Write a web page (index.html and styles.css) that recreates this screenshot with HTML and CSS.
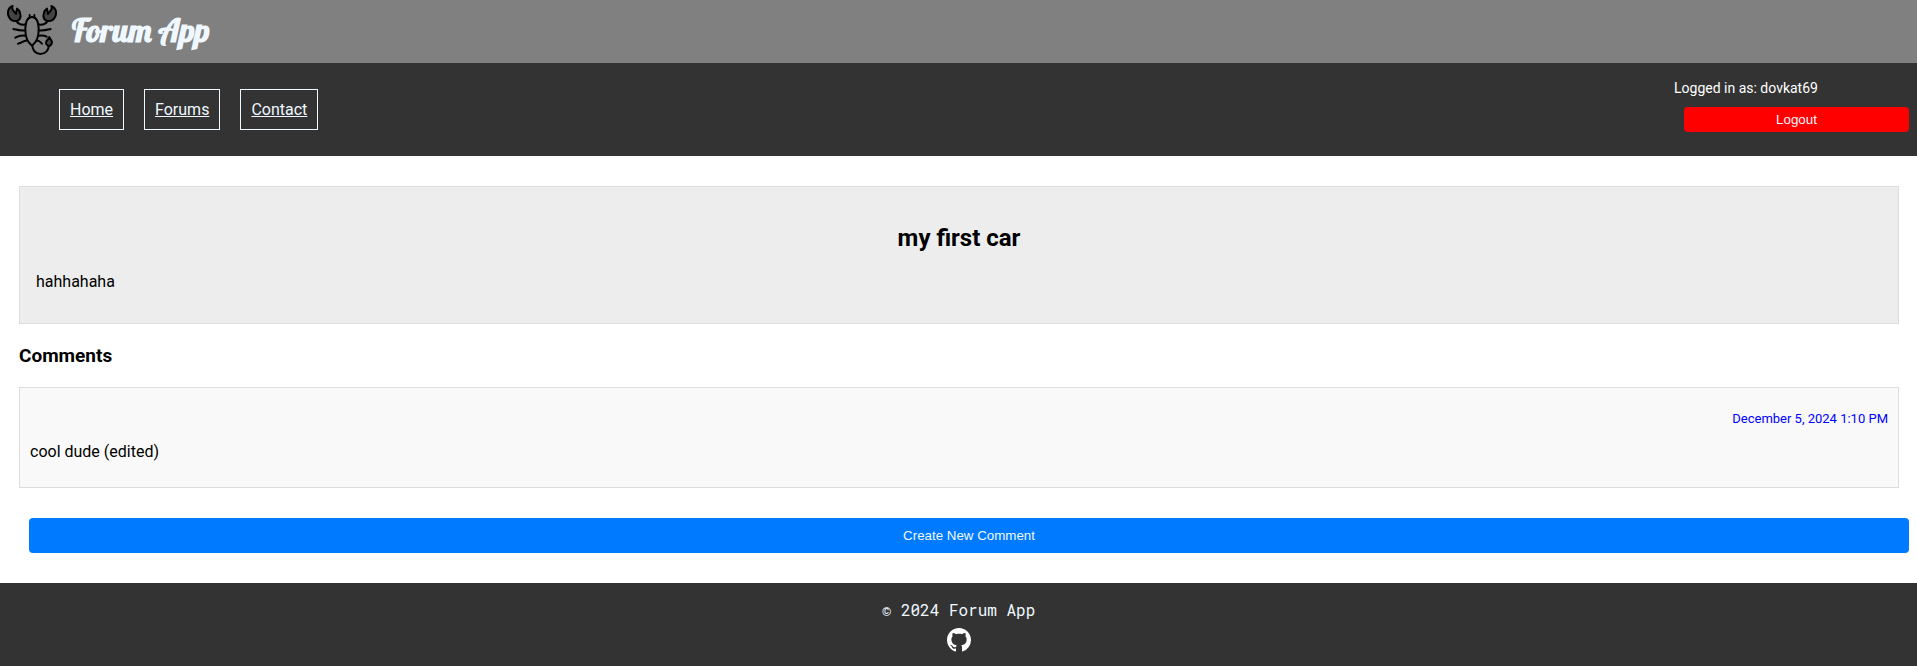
FILE: index.html
```html
<!DOCTYPE html>
<html lang="en">
<head>
<meta charset="utf-8">
<title>Forum App</title>
<link rel="stylesheet" href="styles.css">
</head>
<body>
<header class="brand">
  <svg class="brand-logo" viewBox="0 0 150 150" aria-hidden="true">
    <g fill="none" stroke="#000" stroke-width="6" stroke-linecap="round" stroke-linejoin="round">
      <path fill="#444" d="M17 3C4 7 0 22 5 34c4 10 13 15 23 14 10-2 14-10 12-20-1-8-5-14-10-17l-3 16-8-10c-4-5-5-9-2-14z"/>
      <path fill="#444" d="M133 3c13 4 17 19 12 31-4 10-13 15-23 14-10-2-14-10-12-20 1-8 5-14 10-17l3 16 8-10c4-5 5-9 2-14z"/>
      <path d="M29 49c6 9 14 12 28 9M121 49c-6 9-14 12-28 9"/>
      <path d="M75 36c-14 0-20 18-20 39 0 22 8 38 20 47 12-9 20-25 20-47 0-21-6-39-20-39z"/>
      <path d="M68 38v-8M82 38v-8"/>
      <path d="M55 76c-15 2-24-1-36-4M55 92c-13-1-20 0-30 6M58 107c-9-1-13 8-25 9"/>
      <path d="M95 76c15 2 24-1 36-4M95 92c13-1 19 0 24 3M92 107c6 0 8 5 13 9"/>
      <path d="M76 121c0 15 10 26 24 26 16 0 26-12 25-26"/>
    </g>
    <path fill="#444" stroke="#000" stroke-width="6" stroke-linejoin="round" d="M127 96c-2 7-12 11-10 19 1 5 6 6 9 9 4-3 9-5 9-12 0-6-6-9-8-16z"/>
  </svg>
  <h1 class="brand-name">Forum App</h1>
</header>
<nav class="navbar">
  <ul class="menu">
    <li><a class="menu-link" href="#">Home</a></li>
    <li><a class="menu-link" href="#">Forums</a></li>
    <li><a class="menu-link" href="#">Contact</a></li>
  </ul>
  <div class="account">
    <span class="account-name">Logged in as: dovkat69</span>
    <button class="logout" type="button">Logout</button>
  </div>
</nav>
<main class="content">
  <article class="post">
    <h2 class="post-title">my first car</h2>
    <p class="post-body">hahhahaha</p>
  </article>
  <h3 class="comments-title">Comments</h3>
  <div class="comment">
    <time class="comment-date" datetime="2024-12-05T13:10">December 5, 2024 1:10 PM</time>
    <p class="comment-body">cool dude (edited)</p>
  </div>
  <button class="create" type="button">Create New Comment</button>
</main>
<footer class="footer">
  <p class="copyright">© 2024 Forum App</p>
  <a class="github" href="#" aria-label="GitHub">
    <svg class="github-icon" viewBox="0 0 16 16" fill="currentColor" aria-hidden="true"><path d="M8 0C3.58 0 0 3.58 0 8c0 3.54 2.29 6.53 5.47 7.59.4.07.55-.17.55-.38 0-.19-.01-.82-.01-1.49-2.01.37-2.53-.49-2.69-.94-.09-.23-.48-.94-.82-1.13-.28-.15-.68-.52-.01-.53.63-.01 1.08.58 1.23.82.72 1.21 1.87.87 2.33.66.07-.52.28-.87.51-1.07-1.78-.2-3.64-.89-3.64-3.95 0-.87.31-1.59.82-2.15-.08-.2-.36-1.02.08-2.12 0 0 .67-.21 2.2.82.64-.18 1.32-.27 2-.27s1.36.09 2 .27c1.53-1.04 2.2-.82 2.2-.82.44 1.1.16 1.92.08 2.12.51.56.82 1.27.82 2.15 0 3.07-1.87 3.75-3.65 3.95.29.25.54.73.54 1.48 0 1.07-.01 1.93-.01 2.2 0 .21.15.46.55.38A8.01 8.01 0 0 0 16 8c0-4.42-3.58-8-8-8z"/></svg>
  </a>
</footer>
</body>
</html>
```
FILE: styles.css
```css
* {
  box-sizing: border-box;
}

body {
  margin: 0;
  background: #fff;
  color: #000;
  font-family: Roboto, "Liberation Sans", sans-serif;
  font-size: 16px;
  line-height: 19px;
}

h1, h2, h3, p, ul {
  margin: 0;
}

.brand {
  display: flex;
  align-items: center;
  gap: 15px;
  padding: 5px 7px 8px;
  background: #808080;
}

.brand-logo {
  width: 50px;
  height: 50px;
}

.brand-name {
  color: #f0f8ff;
  font-family: Lobster, "Liberation Serif", serif;
  font-size: 32px;
  line-height: 40px;
}

.navbar {
  display: flex;
  justify-content: space-between;
  align-items: flex-start;
  padding: 16px 8px 24px 59px;
  background: #333;
}

.menu {
  display: flex;
  gap: 20px;
  padding: 10px 0 0;
  list-style: none;
}

.menu-link {
  display: block;
  padding: 10px;
  border: 1px solid #f0f8ff;
  color: #f0f8ff;
}

.account {
  display: flex;
  flex-direction: column;
  gap: 10px;
  width: 235px;
}

.account-name {
  color: #fff;
  font-size: 14px;
  line-height: 18px;
}

.logout {
  margin-left: 10px;
  padding: 5px;
  border: 0;
  border-radius: 4px;
  background: #f00;
  color: #f0f8ff;
  font-family: "Liberation Sans", sans-serif;
  line-height: 15px;
}

.content {
  display: flex;
  flex-direction: column;
  padding: 30px 18px 30px 19px;
}

.post {
  padding: 36px 16px 32px;
  border: 1px solid #ddd;
  background: #ededed;
}

.post-title {
  margin-bottom: 19px;
  font-size: 24px;
  line-height: 30px;
  text-align: center;
}

.comments-title {
  margin: 20px 0;
  font-size: 19px;
  line-height: 23px;
}

.comment {
  display: flex;
  flex-direction: column;
  gap: 14px;
  padding: 22px 10px 26px;
  border: 1px solid #ddd;
  background: #f9f9f9;
}

.comment-date {
  color: #00f;
  font-size: 13px;
  line-height: 18px;
  text-align: right;
}

.create {
  margin: 30px -10px 0 10px;
  padding: 10px;
  border: 0;
  border-radius: 4px;
  background: #007bff;
  color: #f0f8ff;
  font-family: "Liberation Sans", sans-serif;
  line-height: 15px;
}

.footer {
  display: flex;
  flex-direction: column;
  align-items: center;
  gap: 9px;
  padding: 17px 0 14px;
  background: #333;
  color: #f0f8ff;
}

.copyright {
  font-family: "Roboto Mono", "DejaVu Sans Mono", monospace;
}

.github {
  color: #fff;
}

.github-icon {
  display: block;
  width: 24px;
  height: 24px;
}
```
